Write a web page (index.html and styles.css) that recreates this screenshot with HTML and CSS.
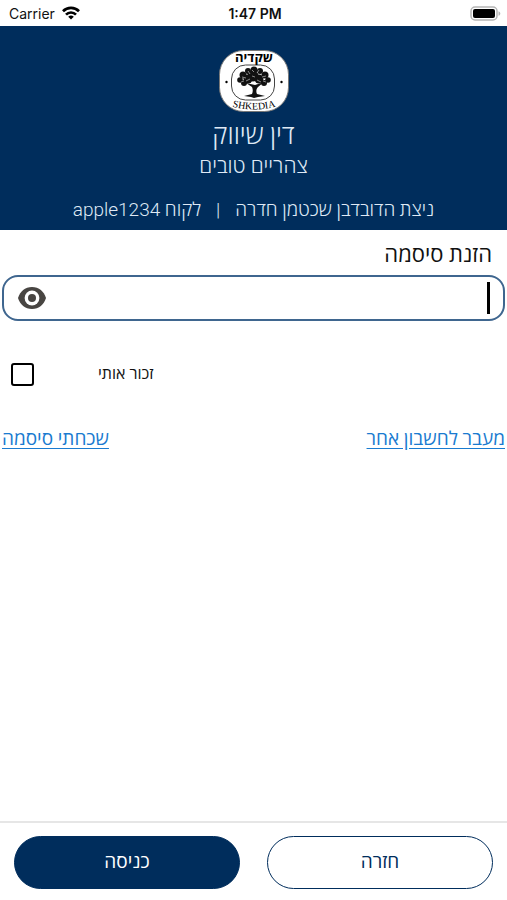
FILE: index.html
```html
<!DOCTYPE html>
<html lang="he" dir="rtl">
<head>
    <meta charset="UTF-8">
    <meta name="viewport" content="width=device-width, initial-scale=1.0">
    <title>שקדיה</title>
    <link rel="stylesheet" href="styles.css">
</head>
<body>
    <div class="status-bar" dir="ltr">
        <div class="carrier">
            <span>Carrier</span>
            <svg width="18" height="14" viewBox="0 0 18 14" fill="none" stroke="#000" stroke-width="2.7">
                <path d="M1 5.2a11.4 11.4 0 0 1 16 0"/>
                <path d="M4 8.6a7 7 0 0 1 10 0"/>
                <path d="M9 13.6L6.2 10.8a4 4 0 0 1 5.6 0z" fill="#000" stroke="none"/>
            </svg>
        </div>
        <span class="time">1:47 PM</span>
        <svg class="battery" width="31" height="15" viewBox="0 0 31 15">
            <rect x="1" y="1" width="26" height="13" rx="4" fill="#fff" stroke="#b5b5b5" stroke-width="1.5"/>
            <rect x="3" y="3" width="22" height="9" rx="2" fill="#000"/>
            <path d="M28.5 5.2c2.4 1 2.4 3.6 0 4.6z" fill="#b5b5b5"/>
        </svg>
    </div>

    <header class="header">
        <svg class="logo" width="72" height="64" viewBox="0 0 72 64">
            <rect x="1.5" y="1.5" width="69" height="61" rx="24" fill="#fff" stroke="#777" stroke-width="1"/>
            <rect x="13.5" y="16" width="43" height="35" rx="14" fill="none" stroke="#444" stroke-width="1"/>
            <text class="logo-he" x="36" y="13" text-anchor="middle" direction="rtl">שקדיה</text>
            <path id="curve" d="M12 57Q36 64 60 57" fill="none"/>
            <text class="logo-en" direction="ltr"><textPath href="#curve" startOffset="50%" text-anchor="middle">SHKEDIA</textPath></text>
            <circle cx="8.5" cy="33" r="1.2"/>
            <circle cx="63.5" cy="33" r="1.2"/>
            <g fill="#111">
                <circle cx="36" cy="21" r="3.5"/>
                <circle cx="30" cy="22" r="3"/>
                <circle cx="42" cy="22" r="3"/>
                <circle cx="25" cy="26" r="3.5"/>
                <circle cx="47" cy="26" r="3.5"/>
                <circle cx="35" cy="27" r="5.5"/>
                <circle cx="30" cy="30" r="4.5"/>
                <circle cx="41" cy="30" r="4.5"/>
                <circle cx="22" cy="31" r="2.8"/>
                <circle cx="50" cy="31" r="2.8"/>
                <circle cx="26" cy="34" r="3"/>
                <circle cx="46" cy="34" r="3"/>
                <path d="M28 34l6 4c1 2 1 5 0 7l-8 2 7 1 3 1 4-1 7-1-8-2c-1-2-1-5 1-7l6-5-9 3z"/>
            </g>
            <g fill="none" stroke="#fff" stroke-width="0.5">
                <path d="M24 28l4 1M30 22l2 3M41 21l-2 3M44 28l4-1M28 32l4-2M39 31l4 2M34 27l3 1M23 33l3-1M45 32l3 1M34 21l2 2"/>
            </g>
        </svg>
        <h1>דין שיווק</h1>
        <h2>צהריים טובים</h2>
        <div class="customer">
            <span>ניצת הדובדבן שכטמן חדרה</span>
            <span>|</span>
            <span>לקוח apple1234</span>
        </div>
    </header>

    <main class="content">
        <label class="title" for="password">הזנת סיסמה</label>
        <div class="field">
            <span class="caret"></span>
            <input type="password" id="password" name="password">
            <button type="button" class="eye" aria-label="הצג סיסמה">
                <svg width="30" height="22" viewBox="0 0 30 22">
                    <path d="M15 0C8 0 3 4.5 1 11c2 6.5 7 11 14 11s12-4.5 14-11C27 4.5 22 0 15 0z" fill="#484542"/>
                    <circle cx="15" cy="11" r="7.4" fill="#fff"/>
                    <circle cx="15" cy="11" r="4" fill="#484542"/>
                </svg>
            </button>
        </div>
        <div class="remember">
            <label for="remember">זכור אותי</label>
            <input type="checkbox" id="remember" name="remember">
        </div>
        <nav class="links">
            <a href="#">מעבר לחשבון אחר</a>
            <a href="#">שכחתי סיסמה</a>
        </nav>
    </main>

    <footer class="footer">
        <button type="button" class="btn back">חזרה</button>
        <button type="submit" class="btn enter">כניסה</button>
    </footer>
</body>
</html>
```

FILE: styles.css
```css
* {
    box-sizing: border-box;
}
body {
    margin: 0;
    min-height: 100vh;
    display: flex;
    flex-direction: column;
    background: #fff;
    color: #111;
    font-family: Roboto, "Open Sans", sans-serif;
}
.status-bar {
    display: grid;
    grid-template-columns: 1fr auto 1fr;
    align-items: center;
    height: 26px;
    padding: 0 6px 0 9px;
    font-family: Inter, sans-serif;
    font-size: 14px;
}
.carrier {
    display: flex;
    align-items: center;
    gap: 7px;
}
.time {
    font-weight: 600;
}
.battery {
    justify-self: end;
}
.header {
    display: flex;
    flex-direction: column;
    align-items: center;
    padding: 23px 16px 8px;
    background: #002d5c;
    color: #dfe9f5;
    font-weight: 300;
}
.logo-he {
    font: 700 13px "Open Sans", sans-serif;
}
.logo-en {
    font: 10px "Liberation Serif", serif;
}
h1 {
    margin: 4px 0 0;
    font-size: 26px;
    line-height: 36px;
    font-weight: 300;
}
h2 {
    margin: 0;
    font-size: 21px;
    line-height: 26px;
    font-weight: 300;
}
.customer {
    display: flex;
    gap: 15px;
    margin-top: 18px;
    font-size: 19px;
    line-height: 25px;
}
.content {
    flex: 1;
    padding: 8px 2px;
}
.title {
    display: block;
    padding: 0 13px;
    font-size: 22px;
    line-height: 33px;
}
.field {
    display: flex;
    align-items: center;
    height: 46px;
    margin-top: 4px;
    padding: 0 13px;
    border: 2px solid #3f668f;
    border-radius: 16px;
}
.caret {
    width: 3px;
    height: 32px;
    background: #000;
}
.field input {
    flex: 1;
    min-width: 0;
    border: none;
    outline: none;
    background: none;
    font-size: 20px;
}
.eye {
    display: flex;
    padding: 0;
    border: none;
    background: none;
    cursor: pointer;
}
.remember {
    display: flex;
    justify-content: flex-end;
    align-items: center;
    gap: 64px;
    margin-top: 41px;
    padding-left: 9px;
    font-size: 16px;
    line-height: 24px;
}
.remember input {
    appearance: none;
    width: 23px;
    height: 23px;
    margin: 0;
    border: 2px solid #000;
    border-radius: 3px;
}
.links {
    display: flex;
    justify-content: space-between;
    margin-top: 39px;
    font-size: 19px;
    line-height: 28px;
}
.links a {
    color: #1a7bd0;
    text-underline-offset: 3px;
}
.footer {
    display: flex;
    gap: 27px;
    padding: 13px 14px 11px;
    border-top: 2px solid #e6e6e6;
}
.btn {
    flex: 1;
    height: 53px;
    padding: 0 0 4px;
    border: 1px solid #002d5c;
    border-radius: 27px;
    font-family: inherit;
    font-size: 19px;
    cursor: pointer;
}
.back {
    background: #fff;
    color: #002d5c;
}
.enter {
    background: #002d5c;
    color: #fff;
}
```
